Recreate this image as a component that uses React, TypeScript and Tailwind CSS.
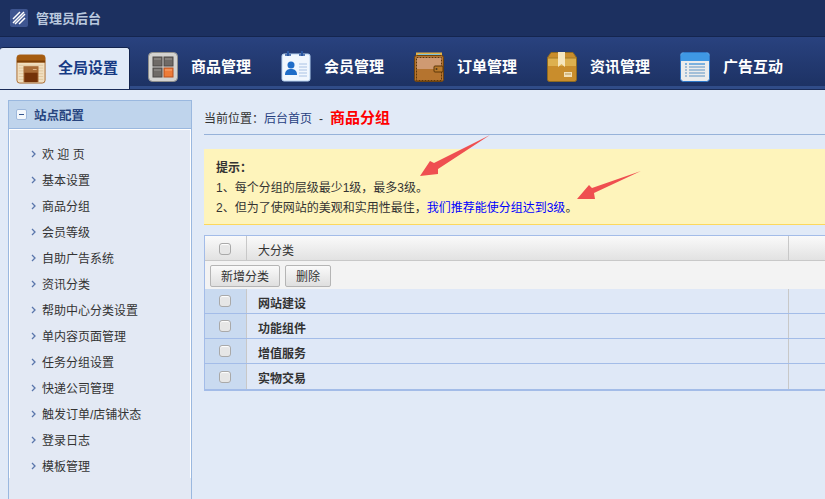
const font = { fontFamily: '"Liberation Sans", "Noto Sans CJK SC", sans-serif' };

const ShopIcon = () => (
  <svg width="30" height="30" viewBox="0 0 32 32">
    <rect x="1" y="1" width="30" height="30" rx="3" fill="#f1dfc0" stroke="#a8682a" />
    <path d="M1 4a3 3 0 0 1 3-3h24a3 3 0 0 1 3 3v5H1z" fill="#a55c10" />
    <rect x="1" y="7" width="30" height="2" fill="#7b3f08" />
    <path d="M3 12h26M3 15h26M3 18h26M3 21h26M3 24h26M3 27h26" stroke="#e0c79e" />
    <rect x="8" y="13" width="16" height="17" fill="#a76a35" />
    <rect x="9" y="20" width="14" height="10" fill="#743208" />
    <rect x="18" y="16" width="4" height="1" fill="#e4b98a" />
  </svg>
);

const GridIcon = () => (
  <svg width="30" height="30" viewBox="0 0 30 30">
    <rect x="0.5" y="0.5" width="29" height="29" rx="4" fill="#d4d3d0" stroke="#8f8f8c" />
    <rect x="5" y="5" width="9" height="9" fill="#6f6a66" stroke="#4c4946" />
    <rect x="16" y="5" width="9" height="9" fill="#6f6a66" stroke="#4c4946" />
    <rect x="5" y="16" width="9" height="9" fill="#6f6a66" stroke="#4c4946" />
    <rect x="16" y="16" width="9" height="9" fill="#ee7b38" stroke="#b8501c" />
    <path d="M6 7h7M17 7h7M6 18h7" stroke="#9a9591" />
    <path d="M17 18h7" stroke="#f9a875" />
  </svg>
);

const MemberIcon = () => (
  <svg width="30" height="32" viewBox="0 0 30 32">
    <rect x="1" y="3" width="28" height="27" rx="2" fill="#f1f7fe" stroke="#b8d4f2" />
    <path d="M7 0v5M21 0v5" stroke="#2a56a0" strokeWidth="2" />
    <path d="M4 4h6M18 4h6" stroke="#2a56a0" strokeWidth="1.5" />
    <circle cx="10" cy="14" r="3.5" fill="#1f6dc8" />
    <path d="M4 24c0-5 3-6 6-6s6 1 6 6z" fill="#1f6dc8" />
    <path d="M18 13h8M18 16h8M18 19h8M18 22h8M18 25h8" stroke="#a9c2e4" />
  </svg>
);

const WalletIcon = () => (
  <svg width="30" height="30" viewBox="0 0 30 30">
    <rect x="2" y="0.5" width="26" height="5" fill="#e2b146" />
    <rect x="4" y="2" width="22" height="2" fill="#7cc1d6" />
    <rect x="0.5" y="3.5" width="29" height="26" rx="2" fill="#b5742f" stroke="#6e4310" />
    <rect x="2" y="5" width="26" height="12" fill="#cf9a72" />
    <rect x="2.5" y="5.5" width="25" height="23" fill="none" stroke="#5c3708" strokeDasharray="2 1" />
    <rect x="20" y="14" width="9" height="6" rx="1" fill="#b97a2c" stroke="#5c3708" />
    <circle cx="22.5" cy="17" r="1" fill="#4a3820" />
  </svg>
);

const BoxIcon = () => (
  <svg width="30" height="30" viewBox="0 0 30 30">
    <path d="M4 0.5h22l3.5 5v22a2 2 0 0 1-2 2h-25a2 2 0 0 1-2-2v-22z" fill="#c98d2c" stroke="#8d6a22" />
    <path d="M1 6h28v8H1z" fill="#ddb04f" />
    <path d="M1 6h28" stroke="#a57a24" />
    <path d="M11 0h7v15l-3.5-3-3.5 3z" fill="#f6e6bd" />
    <rect x="17" y="20" width="8" height="5" fill="#f2dfb6" />
    <path d="M18 22h6" stroke="#b59656" />
  </svg>
);

const ListIcon = () => (
  <svg width="30" height="30" viewBox="0 0 30 30">
    <rect x="0.5" y="0.5" width="29" height="29" rx="3" fill="#ebecec" stroke="#2f78c8" />
    <path d="M1 3a2 2 0 0 1 2-2h24a2 2 0 0 1 2 2v6H1z" fill="#3f98e4" />
    <path d="M5 12h2M9 12h16" stroke="#7ab0de" strokeWidth="2" />
    <path d="M5 15h2M9 15h16M5 18h2M9 18h16M5 21h2M9 21h16M5 24h2M9 24h16" stroke="#5c93c4" />
  </svg>
);

const tabs = [
  { label: '商品管理', icon: <GridIcon /> },
  { label: '会员管理', icon: <MemberIcon /> },
  { label: '订单管理', icon: <WalletIcon /> },
  { label: '资讯管理', icon: <BoxIcon /> },
  { label: '广告互动', icon: <ListIcon /> },
];

const menu = ['欢 迎 页', '基本设置', '商品分组', '会员等级', '自助广告系统', '资讯分类', '帮助中心分类设置', '单内容页面管理', '任务分组设置', '快递公司管理', '触发订单/店铺状态', '登录日志', '模板管理'];

const groups = ['网站建设', '功能组件', '增值服务', '实物交易'];

const Check = () => (
  <span className="block w-[12px] h-[12px] rounded-[3px] border border-[#a9a9a9] bg-[#e6e6e6] shadow-[inset_0_1px_1px_#fff]" />
);

const App = () => {
  return (
    <div style={font} className="relative w-[825px] h-[499px] overflow-hidden bg-[#e1eaf7] text-[12px] text-[#333]">
      {/* Top bar */}
      <div className="h-[37px] bg-[#1c3060] border-b border-[#14254f] flex items-center pl-[10px]">
        <span className="w-[18px] h-[18px] rounded-[2px] bg-[#3e5590] flex items-center justify-center">
          <svg width="14" height="14" viewBox="0 0 14 14">
            <path d="M1 12 L12 1 M3 13 L13 3 M7 13 L13 7 M1 8 L8 1" stroke="#fff" strokeWidth="1.5" />
          </svg>
        </span>
        <span className="ml-[8px] pt-[2px] text-[13px] font-bold text-[#b9c8de]">管理员后台</span>
      </div>

      {/* Main nav */}
      <div className="h-[52px] bg-gradient-to-b from-[#29427f] to-[#1d3264] border-b-[3px] border-b-[#304c88] shadow-[0_1px_0_#1a2c58] flex items-end">
        <div className="w-[130px] h-[42px] -mb-[3px] bg-[#e1eaf7] rounded-tl-[3px] rounded-tr-[3px] border-t border-r border-[#13244e] flex items-center pl-[16px] relative z-10">
          <ShopIcon />
          <span className="ml-[12px] text-[15px] font-bold text-[#173a84]">全局设置</span>
        </div>
        <div className="flex h-[39px] items-center pl-[18px]">
          {tabs.map((tab) => (
            <div key={tab.label} className="flex items-center w-[133px]">
              <span className="w-[30px] flex justify-center">{tab.icon}</span>
              <span className="ml-[13px] pt-[2px] text-[15px] font-bold text-white whitespace-nowrap">{tab.label}</span>
            </div>
          ))}
        </div>
      </div>

      <div className="flex">
        {/* Sidebar */}
        <div className="ml-[8px] mt-[11px] w-[184px] h-[420px] border border-[#9ab8df] bg-[#e3e9f4] shrink-0">
          <div className="h-[28px] bg-[#bfd4ec] border-b border-[#9ab8df] flex items-center pl-[7px] shadow-[0_1px_0_#fff]">
            <span className="w-[11px] h-[11px] rounded-[2px] bg-[#f3f7fc] border border-[#9fb9dc] flex items-center justify-center">
              <span className="block w-[5px] h-px bg-[#34558f]" />
            </span>
            <span className="ml-[7px] pt-[4px] text-[12.5px] font-bold text-[#28457f]">站点配置</span>
          </div>
          <ul className="pt-[11px] border-l border-r border-white">
            {menu.map((item) => (
              <li key={item} className="h-[26px] flex items-center pl-[21px] pt-[4px]">
                <svg width="5" height="8" viewBox="0 0 5 8" className="mb-[3px]">
                  <path d="M1 1l3 3-3 3" fill="none" stroke="#5a76ab" strokeWidth="1.3" />
                </svg>
                <span className="ml-[6px] whitespace-nowrap">{item}</span>
              </li>
            ))}
          </ul>
        </div>

        {/* Content */}
        <div className="ml-[12px] w-[621px] shrink-0">
          <div className="h-[46px] border-b border-[#96b2d9] flex items-center pt-[14px]">
            <span className="text-[#333]">当前位置：</span>
            <span className="text-[#27407f]">后台首页</span>
            <span className="ml-[7px] mr-[7px]">-</span>
            <span className="text-[15px] font-bold text-[#ff0000]">商品分组</span>
          </div>

          <div className="mt-[14px] h-[76px] bg-[#fef4bb] border-b border-[#fdd85c] pl-[12px] pt-[9px] leading-[20px]">
            <div className="font-bold">提示：</div>
            <div>1、每个分组的层级最少1级，最多3级。</div>
            <div>
              2、但为了使网站的美观和实用性最佳，<span className="text-[#0000ff]">我们推荐能使分组达到3级</span>。
            </div>
          </div>

          {/* Table */}
          <div className="mt-[10px] border-t border-l border-b-2 border-[#a3bce8]">
            <div className="h-[25px] flex bg-gradient-to-b from-[#fafafa] to-[#e2e2e2] border-b border-[#c8c8c8]">
              <div className="w-[42px] border-r border-[#c8c8c8] flex items-center justify-center pt-[2px] pr-[2px]">
                <Check />
              </div>
              <div className="w-[542px] border-r border-[#c8c8c8] pl-[11px] pt-[6px] flex items-center">大分类</div>
            </div>
            <div className="h-[28px] bg-[#f3f3f3] flex items-center pl-[5px] pt-[2px] gap-[5px]">
              <button className="h-[22px] w-[70px] pt-[2px] rounded-[2px] border border-[#b5b5b5] bg-gradient-to-b from-[#fafafa] to-[#dfdfdf] text-[12px] text-[#333]">新增分类</button>
              <button className="h-[22px] w-[46px] pt-[2px] rounded-[2px] border border-[#b5b5b5] bg-gradient-to-b from-[#fafafa] to-[#dfdfdf] text-[12px] text-[#333]">删除</button>
            </div>
            {groups.map((g, i) => (
              <div key={g} className={`h-[25px] flex bg-[#dfe8f7] ${i < groups.length - 1 ? 'border-b border-[#a3bce8]' : ''}`}>
                <div className="w-[42px] bg-[#c9daf0] border-r border-[#c8c8c8] flex items-center justify-center pr-[2px]">
                  <Check />
                </div>
                <div className="w-[542px] border-r border-[#c8c8c8] pl-[11px] pt-[5px] flex items-center font-bold">{g}</div>
              </div>
            ))}
          </div>
        </div>
      </div>

      {/* Hand-drawn arrows over the notice */}
      <svg className="absolute left-[420px] top-[135px] w-[71px] h-[41px]" viewBox="0 0 71 41">
        <polygon points="70,0 18,34 18,39 0,41 10,26 14,28" fill="#ef4f50" />
      </svg>
      <svg className="absolute left-[577px] top-[171px] w-[64px] h-[29px]" viewBox="0 0 64 29">
        <polygon points="64,0 17,22 18,28 0,28 12,14 15,17" fill="#ef4f50" />
      </svg>
    </div>
  );
};

export default App;
